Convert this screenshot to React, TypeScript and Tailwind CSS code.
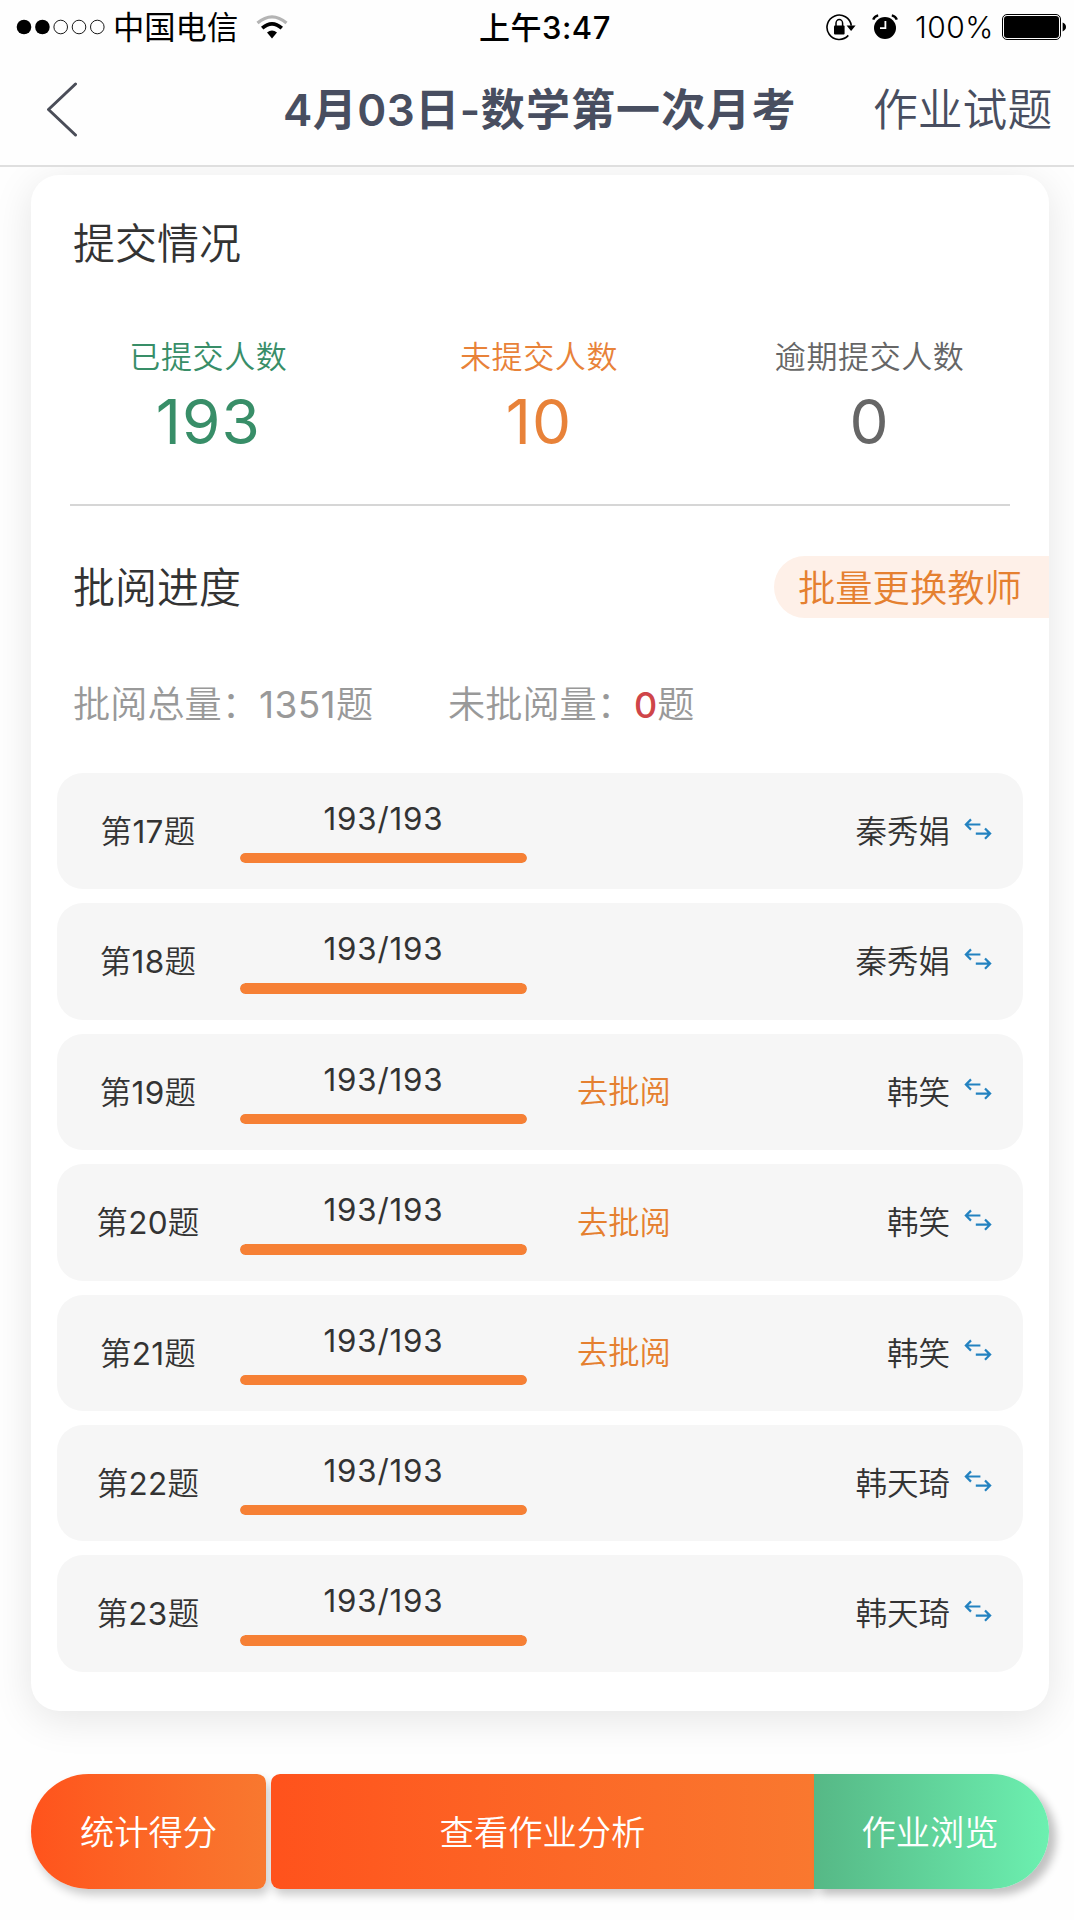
const stats = [
  { label: "已提交人数", value: 193, color: "text-[#388e68]" },
  { label: "未提交人数", value: 10, color: "text-[#e88239]" },
  { label: "逾期提交人数", value: 0, color: "text-[#666666]" },
];

const questions = [
  { no: 17, done: 193, total: 193, teacher: "秦秀娟", mine: false },
  { no: 18, done: 193, total: 193, teacher: "秦秀娟", mine: false },
  { no: 19, done: 193, total: 193, teacher: "韩笑", mine: true },
  { no: 20, done: 193, total: 193, teacher: "韩笑", mine: true },
  { no: 21, done: 193, total: 193, teacher: "韩笑", mine: true },
  { no: 22, done: 193, total: 193, teacher: "韩天琦", mine: false },
  { no: 23, done: 193, total: 193, teacher: "韩天琦", mine: false },
];

function SignalDots() {
  return (
    <svg width="90" height="16" viewBox="0 0 90 16">
      <circle cx="8" cy="8" r="7.3" />
      <circle cx="26.4" cy="8" r="7.3" />
      <g fill="none" stroke="#000" strokeWidth="0.9">
        <circle cx="44.7" cy="8" r="6.8" />
        <circle cx="63" cy="8" r="6.8" />
        <circle cx="81.3" cy="8" r="6.8" />
      </g>
    </svg>
  );
}

function WifiIcon() {
  return (
    <svg width="32" height="24" viewBox="0 0 32 24" fill="none">
      <path d="M1.5 8 Q16 -4.4 30.5 8" stroke="#b4b4b4" strokeWidth="3.2" />
      <path d="M6.2 13.2 Q16 4.4 25.8 13.2" stroke="#000" strokeWidth="3.6" />
      <path d="M11 17.6 Q16 13.6 21 17.6 L16 23.4 Z" fill="#000" />
    </svg>
  );
}

function RotationLockIcon() {
  return (
    <svg width="30" height="28" viewBox="0 0 30 28" fill="none">
      <path d="M22.3 22.4 A12.2 12.2 0 1 1 25.3 12.6" stroke="#000" strokeWidth="1.6" />
      <path d="M20.6 12.6 H29.6 L25.1 18 Z" fill="#000" />
      <rect x="8" y="12.6" width="10.6" height="8.8" rx="1" fill="#000" />
      <path d="M10 13 V10.2 a3.3 3.6 0 0 1 6.6 0 V13" stroke="#000" strokeWidth="1.5" />
    </svg>
  );
}

function AlarmIcon() {
  return (
    <svg width="26" height="26" viewBox="0 0 26 26" fill="none">
      <circle cx="13" cy="14" r="11" fill="#000" />
      <path d="M1.2 5.6 Q2.4 2.2 6.2 1.4" stroke="#000" strokeWidth="2.4" />
      <path d="M24.8 5.6 Q23.6 2.2 19.8 1.4" stroke="#000" strokeWidth="2.4" />
      <path d="M13.4 7 V14.2 H8" stroke="#fff" strokeWidth="1.8" />
    </svg>
  );
}

function BatteryIcon() {
  return (
    <svg width="65" height="26" viewBox="0 0 65 26">
      <rect x="0.5" y="0.5" width="58" height="25" rx="4.5" fill="none" stroke="#000" strokeWidth="1" />
      <rect x="2" y="2" width="55" height="22" rx="3.2" />
      <path d="M60.6 8.6 Q64 10 64 13 Q64 16 60.6 17.4 Z" />
    </svg>
  );
}

function SwapIcon() {
  return (
    <svg width="28" height="22" viewBox="0 0 28 22" fill="none" stroke="#2382c0" strokeWidth="2.2">
      <path d="M16.4 6.5 H2 M7 1.4 L1.9 6.5 L7 11.6" />
      <path d="M11.8 15.6 H26 M21 10.5 L26.1 15.6 L21 20.7" />
    </svg>
  );
}

function StatusBar() {
  return (
    <div className="grid h-[54px] grid-cols-[479px_1fr_248px] items-center text-[31px] leading-none text-black">
      <div className="flex items-center pl-4">
        <SignalDots />
        <span className="ml-[7px] pt-[3px] text-[31.3px]">中国电信</span>
        <span className="ml-[18px]">
          <WifiIcon />
        </span>
      </div>
      <span className="text-[31px] font-medium tracking-[0.5px]">上午3:47</span>
      <div className="flex items-center">
        <RotationLockIcon />
        <span className="ml-4">
          <AlarmIcon />
        </span>
        <span className="ml-[17px] w-[87px] text-[30px] font-[350] tracking-[0.5px]">100%</span>
        <BatteryIcon />
      </div>
    </div>
  );
}

function NavBar() {
  return (
    <header className="flex h-[113px] items-center border-b-2 border-[#dfdfdf] text-[#484e60]">
      <svg className="ml-[45px]" width="34" height="56" viewBox="0 0 34 56" fill="none" stroke="#4a4d58" strokeWidth="3" strokeLinecap="round" strokeLinejoin="round">
        <path d="M30.5 2 L3.5 27.5 L30.5 53" />
      </svg>
      <h1 className="ml-[204px] w-[590px] pt-[1px] text-[44px] font-semibold tracking-[1.1px]">
        <span className="tracking-[0.5px]">4月03日-</span>数学第一次月考
      </h1>
      <button className="pt-[2px] text-[44.8px] font-[350]">作业试题</button>
    </header>
  );
}

export default function App() {
  return (
    <div
      className="flex h-[1920px] w-[1074px] flex-col overflow-hidden bg-[#fefefe] text-[#333333]"
      style={{ fontFamily: 'Inter, "Noto Sans CJK SC", sans-serif' }}
    >
      <div className="relative z-10 bg-[#fefefe]">
        <StatusBar />
        <NavBar />
      </div>

      <main className="mx-[31px] mt-2 h-[1536px] w-[1018px] shrink-0 rounded-[28px] bg-white font-[350] shadow-[0_8px_40px_rgba(0,0,0,0.1)]">
        <h2 className="flex h-[138px] items-center pl-[42px] text-[42px] leading-none">提交情况</h2>
        <div className="mr-[14px] ml-[12px] grid h-[191px] grid-cols-3 pt-[24px] text-center">
          {stats.map((s) => (
            <div key={s.label} className={s.color}>
              <div className="h-[40px] text-[31px] leading-[40px] tracking-[0.6px]">{s.label}</div>
              <div className="mt-[10px] text-[62px] leading-[70px] font-[380] tracking-[1px]">{s.value}</div>
            </div>
          ))}
        </div>
        <hr className="mx-[39px] border-t-2 border-[#d6d6d6]" />

        <div className="mt-[50px] flex h-[62px] items-center justify-between pl-[42px]">
          <h2 className="pt-[2px] text-[42px] leading-none">批阅进度</h2>
          <button className="h-[62px] w-[275px] rounded-l-full bg-[#fef0e8] pt-[3px] pl-6 text-left text-[37.3px] leading-none text-[#e58030]">
            批量更换教师
          </button>
        </div>

        <div className="mt-[62px] flex h-[50px] items-center pl-[42px] text-[37.2px] leading-none text-[#999999]">
          <span className="w-[375px]">
            批阅总量：<span className="text-[37px] font-normal tracking-[0.4px]">1351</span>题
          </span>
          <span>
            未批阅量：<span className="text-[36px] font-[450] text-[#cf4549]">0</span>题
          </span>
        </div>

        <ul className="mx-[26px] mt-[43px] flex flex-col gap-[14px] text-[31.5px] leading-none">
          {questions.map((q) => (
            <li key={q.no} className="flex h-[116.4px] items-center rounded-[26px] bg-[#f6f6f6]">
              <span className="w-[182px] pt-[1px] text-center tracking-[0.3px]">
                第<span className="font-normal">{q.no}</span>题
              </span>
              <div className="ml-[1px] flex w-[287px] flex-col items-center">
                <span className="text-[31.3px] leading-[40px] font-normal tracking-[0.8px]">
                  {q.done}/{q.total}
                </span>
                <div className="mt-[14px] h-[10.5px] w-full overflow-hidden rounded-full bg-[#e4e4e4]">
                  <div className="h-full rounded-full bg-[#f68035]" style={{ width: `${(q.done / q.total) * 100}%` }} />
                </div>
              </div>
              <span className="ml-[50px] pt-[2px] text-[31.3px] text-[#e58030]">{q.mine && "去批阅"}</span>
              <span className="ml-auto pt-[1px]">{q.teacher}</span>
              <span className="mr-[31px] mb-[5px] ml-[14px]">
                <SwapIcon />
              </span>
            </li>
          ))}
        </ul>
      </main>

      <footer className="mt-[63px] ml-[31px] flex h-[115px] w-[1018px] shrink-0 text-[34.3px] font-[350] text-white">
        <button className="mr-[5px] w-[235px] rounded-l-[58px] rounded-r-[9px] bg-linear-to-r from-[#ff531c] to-[#f8782f] pt-[2px] shadow-[3px_6px_10px_rgba(0,0,0,0.2)]">
          统计得分
        </button>
        <button className="w-[543px] rounded-l-[9px] bg-linear-to-r from-[#ff521c] to-[#f9782f] pt-[2px] shadow-[3px_6px_10px_rgba(0,0,0,0.2)]">
          查看作业分析
        </button>
        <button className="w-[235px] rounded-r-[58px] bg-linear-to-r from-[#56b886] to-[#6cf0b0] pt-[2px] pr-[3px] shadow-[7px_6px_8px_rgba(0,0,0,0.24)]">
          作业浏览
        </button>
      </footer>
    </div>
  );
}
